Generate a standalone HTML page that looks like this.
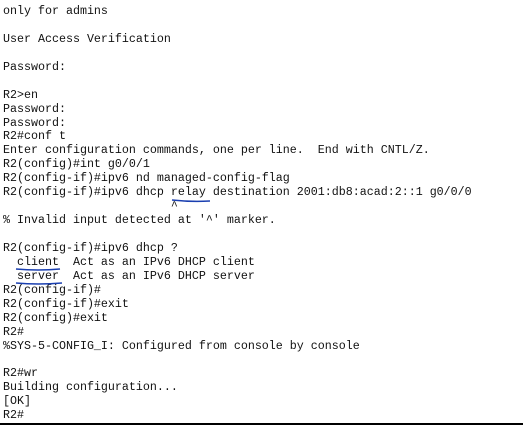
<!DOCTYPE html>
<html><head><style>
html,body{margin:0;padding:0;background:#fff;width:523px;height:425px;overflow:hidden;position:relative}
pre{position:absolute;left:3px;top:5px;margin:0;font-family:"Liberation Mono",monospace;font-size:11.67px;line-height:13.93px;color:#111}
.bar{position:absolute;left:0;bottom:0;width:523px;height:2px;background:#000}
svg{position:absolute;left:0;top:0}
</style></head><body>
<pre>only for admins

User Access Verification

Password:

R2&gt;en
Password:
Password:
R2#conf t
Enter configuration commands, one per line.  End with CNTL/Z.
R2(config)#int g0/0/1
R2(config-if)#ipv6 nd managed-config-flag
R2(config-if)#ipv6 dhcp relay destination 2001:db8:acad:2::1 g0/0/0
                        ^
% Invalid input detected at '^' marker.

R2(config-if)#ipv6 dhcp ?
  client  Act as an IPv6 DHCP client
  server  Act as an IPv6 DHCP server
R2(config-if)#
R2(config-if)#exit
R2(config)#exit
R2#
%SYS-5-CONFIG_I: Configured from console by console

R2#wr
Building configuration...
[OK]
R2#</pre>
<svg width="523" height="425">
<path d="M172 200 Q190 202 210 201" stroke="#1a3fb0" stroke-width="1.5" fill="none"/>
<path d="M16 269 Q38 271 60 269" stroke="#1a3fb0" stroke-width="1.5" fill="none"/>
<path d="M16 283 Q38 285 62 283" stroke="#1a3fb0" stroke-width="1.5" fill="none"/>
</svg>
<div class="bar"></div>
</body></html>
